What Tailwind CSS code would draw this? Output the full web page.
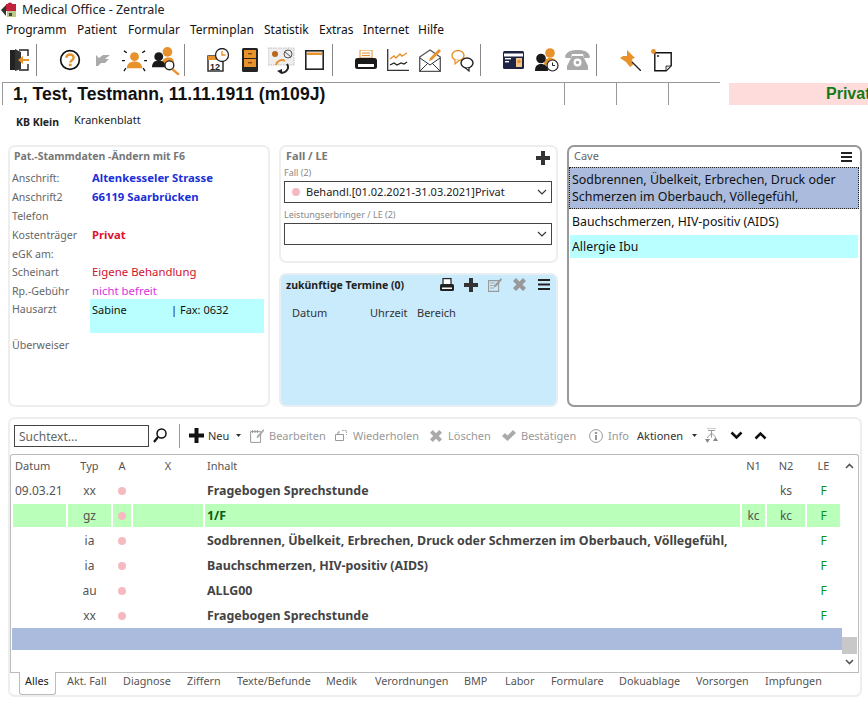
<!DOCTYPE html>
<html lang="de">
<head>
<meta charset="UTF-8">
<title>Medical Office - Zentrale</title>
<script src="https://cdn.jsdelivr.net/npm/@tailwindcss/browser@4"></script>
</head>
<body class="bg-white">
<div class="w-[868px] h-[703px] overflow-hidden bg-white text-[12px] leading-[16px] text-[#222] font-['Noto_Sans',sans-serif]">

 <!-- title bar -->
 <div class="h-[20px] flex items-center pl-[1px]">
  <svg width="16" height="16" viewBox="0 0 16 16"><path d="M0 8 5 3v11z" fill="#333"/><rect x="5" y="2" width="10" height="7" fill="#c2203c"/><circle cx="9" cy="3" r="2.5" fill="#c2203c"/><rect x="6" y="9" width="9" height="6" fill="#b9c98a"/><rect x="8" y="11" width="3" height="3" fill="#444"/></svg>
  <span class="ml-[5px] text-[12.5px]">Medical Office - Zentrale</span>
 </div>

 <!-- menu -->
 <div class="h-[22px] flex items-start pt-[2px] pl-[6px] text-[12px] text-[#111]">
  <span class="w-[71px]">Programm</span><span class="w-[51px]">Patient</span><span class="w-[62px]">Formular</span><span class="w-[74px]">Terminplan</span><span class="w-[55px]">Statistik</span><span class="w-[44px]">Extras</span><span class="w-[55px]">Internet</span><span>Hilfe</span>
 </div>

 <!-- toolbar -->
 <div class="mt-[2px] h-[32px] flex items-center">
  <svg class="ml-[10px]" width="20" height="24" viewBox="0 0 20 24"><path d="M0 2h5v20H0z" fill="#222"/><path d="M5 1l6 3v17l-6 2z" fill="#333"/><path d="M9 2h9v6M18 16v6H9" fill="none" stroke="#222" stroke-width="1.4"/><path d="M19 11h-6V8l-5 4 5 4v-3h6z" fill="#e8922c"/></svg>
  <div class="ml-[6px] w-[1px] h-[32px] bg-[#888]"></div>
  <svg class="ml-[22px]" width="22" height="22" viewBox="0 0 24 24"><circle cx="12" cy="12" r="10.2" fill="none" stroke="#111" stroke-width="1.8"/><path d="M8 9.5C8 7 10 6 12 6s4 1.2 4 3.4c0 3-3.6 3-3.6 5.4" fill="none" stroke="#e8922c" stroke-width="2.6"/><rect x="10.8" y="16" width="3" height="2.8" fill="#e8922c"/></svg>
  <svg class="ml-[14px]" width="15" height="12" viewBox="0 0 15 12"><path d="M1 1l3 3 4-3h7l-5 4h4l-4 4H6l-3 3H1z" fill="#aaa"/></svg>
  <svg class="ml-[12px]" width="25" height="25" viewBox="0 0 26 26"><circle cx="13" cy="9" r="4.6" fill="#e8922c"/><path d="M5 21c0-5 4-7 8-7s8 2 8 7z" fill="#e8922c"/><path d="M0 13h3M23 13h3M2 3l3 2M24 3l-3 2M2 24l2-3M24 24l-2-3" stroke="#111" stroke-width="1.3"/></svg>
  <svg class="ml-[5px]" width="28" height="29" viewBox="0 0 29 30"><circle cx="16" cy="6" r="5" fill="#e8922c"/><path d="M10 20c0-6 3-8 7-8s6 2 6 6z" fill="#e8922c"/><circle cx="7" cy="11" r="4.6" fill="#1a1a1a"/><path d="M0 22c0-5 3-7 7-7s7 2 7 7z" fill="#1a1a1a"/><circle cx="18" cy="20" r="4.6" fill="#fff" stroke="#222" stroke-width="1.4"/><path d="M21 24l7 6" stroke="#e8922c" stroke-width="2.4"/></svg>
  <div class="ml-[4px] w-[1px] h-[32px] bg-[#888]"></div>
  <svg class="ml-[22px]" width="23" height="24" viewBox="0 0 23 24"><rect x="1" y="8" width="15" height="15" fill="#fff" stroke="#222" stroke-width="1.4"/><rect x="1" y="8" width="15" height="4" fill="#e8922c"/><text x="3" y="21.5" font-size="9" font-weight="700" fill="#222" font-family="Liberation Sans">12</text><circle cx="15" cy="7" r="6.5" fill="#fff" stroke="#222" stroke-width="1.3"/><path d="M15 3v4h3.5" fill="none" stroke="#e8922c" stroke-width="1.4"/></svg>
  <svg class="ml-[12px]" width="16" height="24" viewBox="0 0 16 24"><rect width="16" height="24" rx="1.5" fill="#222"/><rect x="2" y="2" width="12" height="8" fill="#e8922c"/><rect x="2" y="11" width="12" height="8" fill="#e8922c"/><rect x="6" y="5" width="4" height="1.4" fill="#7a4a10"/><rect x="6" y="14" width="4" height="1.4" fill="#7a4a10"/></svg>
  <svg class="ml-[10px]" width="27" height="27" viewBox="0 0 27 27"><rect x="0" y="1" width="26" height="17" fill="#eee" stroke="#999" stroke-width=".6" stroke-dasharray="1.5 1"/><circle cx="7" cy="7" r="3" fill="#b9651a"/><circle cx="20" cy="7" r="4" fill="none" stroke="#555"/><path d="M17 5l6 5" stroke="#555"/><path d="M8 18a6 6 0 0 1 9-4" fill="none" stroke="#e8922c" stroke-width="2"/><path d="M19 17a5.500 5.500 0 0 1-7 8" fill="none" stroke="#222" stroke-width="2"/><path d="M14 22v5l-5-3z" fill="#222"/></svg>
  <svg class="ml-[10px]" width="19" height="20" viewBox="0 0 19 20"><rect x=".8" y=".8" width="17.400" height="18.400" fill="#fff" stroke="#222" stroke-width="1.600"/><rect x="2" y="2.500" width="15" height="2.500" fill="#e8922c"/></svg>
  <div class="ml-[8px] w-[1px] h-[32px] bg-[#888]"></div>
  <svg class="ml-[22px]" width="22" height="21" viewBox="0 0 22 21"><rect x="5" y="0" width="12" height="8" fill="#fff" stroke="#e8922c"/><path d="M7 3h8M7 5.500h8" stroke="#e8922c"/><rect x="0" y="8" width="22" height="11" rx="2.500" fill="#1a1a1a"/><rect x="3" y="14" width="16" height="3" fill="#fff"/></svg>
  <svg class="ml-[10px]" width="22" height="22" viewBox="0 0 22 22"><path d="M.7 0v21.300H22" fill="none" stroke="#333" stroke-width="1.300"/><path d="M3 10l4-3 2 2 4-4 2 2 5-3" fill="none" stroke="#e8922c" stroke-width="1.400"/><path d="M3 16l4-2 3 2 4-2 3 1 3-2" fill="none" stroke="#222" stroke-width="1.300"/></svg>
  <svg class="ml-[10px]" width="22" height="23" viewBox="0 0 22 23"><path d="M.7 8 11 1l10.300 7v14.300H.7z" fill="#fff" stroke="#555" stroke-width="1.300"/><path d="M1 9l10 7 10-7M1 22l8-8M21 22l-8-8" fill="none" stroke="#333"/><path d="M20 0l-9 9-1 3 3-1 9-9z" fill="#e8922c"/></svg>
  <svg class="ml-[10px]" width="23" height="23" viewBox="0 0 23 23"><ellipse cx="7" cy="6.500" rx="6" ry="5" fill="#fff" stroke="#e8922c" stroke-width="1.400"/><path d="M4 11v4l4-3.500" fill="#fff" stroke="#e8922c" stroke-width="1.200"/><ellipse cx="16" cy="14" rx="6" ry="5" fill="#fff" stroke="#222" stroke-width="1.400"/><path d="M18 19v3l-4-3.500" fill="#fff" stroke="#222" stroke-width="1.200"/></svg>
  <div class="ml-[6px] w-[1px] h-[32px] bg-[#888]"></div>
  <svg class="ml-[22px]" width="21" height="18" viewBox="0 0 21 18"><rect width="21" height="18" rx="1.500" fill="#1f2444"/><rect x="1" y="2.500" width="19" height="3" fill="#fff"/><rect x="2" y="7" width="6" height="1.400" fill="#fff"/><rect x="2" y="10" width="4" height="1.400" fill="#fff"/><rect x="13" y="7" width="6" height="9" fill="#f0c78a"/><circle cx="16" cy="10.500" r="1.800" fill="#e8922c"/></svg>
  <svg class="ml-[11px]" width="24" height="24" viewBox="0 0 24 24"><circle cx="15" cy="5" r="4.800" fill="#e8922c"/><path d="M9 17c0-5 2-7 6-7s7 2 7 6z" fill="#e8922c"/><circle cx="6" cy="10.500" r="4.800" fill="#1a1a1a"/><path d="M0 23c0-5 2-7 6-7s7 2 7 7z" fill="#1a1a1a"/><circle cx="17.500" cy="17.500" r="5.500" fill="#fff" stroke="#222" stroke-width="1.200"/><path d="M17.500 14.500v3h2.500" fill="none" stroke="#222"/></svg>
  <svg class="ml-[6px]" width="25" height="20" viewBox="0 0 25 20"><path d="M0 7C1 1 7 0 12.500 0S24 1 25 7l-1 1h-5l-1-4H7L6 8H1z" fill="#aaa"/><path d="M7 6h11l5 10v4H2v-4z" fill="#aaa"/><circle cx="12.500" cy="12.500" r="4" fill="#fff"/><circle cx="12.500" cy="12.500" r="1.800" fill="#aaa"/></svg>
  <div class="ml-[6px] w-[1px] h-[32px] bg-[#888]"></div>
  <svg class="ml-[23px]" width="21" height="21" viewBox="0 0 21 21"><path d="M7 0l8 8-3 1 1 6-3 2-4-5-6-4 3-2h4z" fill="#e8922c"/><path d="M12 12l9 9" stroke="#222" stroke-width="1.300"/></svg>
  <svg class="ml-[10px]" width="21" height="23" viewBox="0 0 21 23"><path d="M3.800 3.800h16.400v13l-5 5H3.800z" fill="#fff" stroke="#111" stroke-width="1.400"/><path d="M15 22v-5h5z" fill="#ddd" stroke="#111" stroke-width=".8"/><circle cx="2.500" cy="2.500" r="2.400" fill="#e8922c"/><circle cx="7" cy="7" r="1" fill="#111"/></svg>
 </div>

 <!-- patient header -->
 <div class="mt-[6px] h-[23px] flex pl-[2px]">
  <div class="w-[562px] border-t border-l border-[#999] pl-[10px] font-['Liberation_Sans',sans-serif] font-bold text-[17.600px] leading-[22px] text-[#111]">1, Test, Testmann, 11.11.1911 (m109J)</div>
  <div class="w-[52px] border-t border-l border-[#999]"></div>
  <div class="w-[52px] border-t border-l border-[#999]"></div>
  <div class="w-[52px] border-t border-l border-[#999]"></div>
  <div class="ml-[9px] w-[139px] mt-[1px] bg-[#ffdcdc] pl-[97px] font-['Liberation_Sans',sans-serif] font-bold text-[16px] leading-[21px] text-[#157a15] whitespace-nowrap">Privat</div>
 </div>

 <!-- sub tabs -->
 <div class="h-[40px] flex items-start pt-[7px] text-[11px]">
  <span class="ml-[16px] w-[58px] font-bold text-[10.500px] mt-[2px]">KB Klein</span>
  <span>Krankenblatt</span>
 </div>

 <!-- top cards -->
 <div class="flex h-[262px] pl-[8px]">
  <div class="w-[262px] rounded-[7px] border-2 border-[#eee] relative">
   <div class="pl-[4px] pt-[1px] h-[20px] font-bold text-[10.500px] text-[#777]">Pat.-Stammdaten -Ändern mit F6</div>
   <div class="grid grid-cols-[80px_1fr] auto-rows-[19px] pl-[2px] mt-[1px] text-[10.600px] text-[#666] items-center">
    <div>Anschrift:</div><div class="font-bold text-[11.300px] text-[#1a2fd8]">Altenkesseler Strasse</div>
    <div>Anschrift2</div><div class="font-bold text-[11.300px] text-[#1a2fd8]">66119 Saarbrücken</div>
    <div>Telefon</div><div></div>
    <div>Kostenträger</div><div class="font-bold text-[11.300px] text-[#e01030]">Privat</div>
    <div>eGK am:</div><div></div>
    <div class="-mt-[2px]">Scheinart</div><div class="-mt-[1px] text-[11.400px] text-[#d01030]">Eigene Behandlung</div>
    <div class="-mt-[2px]">Rp.-Gebühr</div><div class="-mt-[1px] text-[11.400px] text-[#e030e0]">nicht befreit</div>
    <div class="self-start">Hausarzt</div>
    <div class="row-span-2 self-start -ml-[2px] h-[34px] mr-[4px] -mt-[2px] bg-[#baffff] text-[11px] text-[#111] pl-[2px] pt-[3px] flex"><span class="w-[79px]">Sabine</span><span>| Fax: 0632</span></div>
    <div></div>
    <div class="-mt-[4px] h-[19px]">Überweiser</div>
   </div>
  </div>

  <div class="ml-[9px] w-[279px] flex flex-col">
   <div class="h-[118px] rounded-[7px] border-2 border-[#eee] pl-[3px] pr-[4px]">
    <div class="h-[20px] pt-[1px] flex justify-between items-start">
     <span class="pl-[2px] font-bold text-[11px] text-[#777]">Fall / LE</span>
     <svg class="mr-[2px] mt-[3px]" width="14" height="14" viewBox="0 0 14 14"><path d="M5 0h4v5h5v4H9v5H5V9H0V5h5z" fill="#333"/></svg>
    </div>
    <div class="text-[9px] leading-[12px] text-[#888]">Fall (2)</div>
    <div class="mt-[2px] h-[22px] border border-[#444] flex items-center pl-[7px] relative text-[11px] text-[#222]">
     <span class="w-[8px] h-[8px] rounded-full bg-[#f7b9c0]"></span>
     <span class="ml-[6px]">Behandl.[01.02.2021-31.03.2021]Privat</span>
     <svg class="absolute right-[4px] top-[7px]" width="10" height="6" viewBox="0 0 10 6"><path d="M1 1l4 4 4-4" fill="none" stroke="#333" stroke-width="1.100"/></svg>
    </div>
    <div class="text-[9px] leading-[12px] text-[#888] mt-[6px]">Leistungserbringer / LE (2)</div>
    <div class="mt-[2px] h-[22px] border border-[#444] relative">
     <svg class="absolute right-[4px] top-[7px]" width="10" height="6" viewBox="0 0 10 6"><path d="M1 1l4 4 4-4" fill="none" stroke="#333" stroke-width="1.100"/></svg>
    </div>
   </div>
   <div class="mt-[10px] h-[134px] rounded-[7px] border-2 border-[#e8eef2] bg-[#c9ebfc]">
    <div class="h-[19px] flex items-center pl-[5px] relative">
     <span class="w-[149px] font-bold text-[10.500px] text-[#222]">zukünftige Termine (0)</span>
     <svg class="ml-[5px]" width="14" height="14" viewBox="0 0 14 14"><rect x="3" y=".6" width="8" height="6" fill="#fff" stroke="#222" stroke-width="1.200"/><rect y="6" width="14" height="7" rx="1.500" fill="#222"/><rect x="2" y="9.500" width="10" height="1.500" fill="#fff"/></svg>
     <svg class="ml-[10px]" width="14" height="14" viewBox="0 0 14 14"><path d="M5 0h4v5h5v4H9v5H5V9H0V5h5z" fill="#333"/></svg>
     <svg class="ml-[10px]" width="14" height="14" viewBox="0 0 14 14"><path d="M.6 2.600h10v10.800H.6z" fill="none" stroke="#999" stroke-width="1.100"/><path d="M2 5h5M2 7.500h4M2 10h4" stroke="#aaa"/><path d="M13 0 6.500 7l-.8 2.500L8 8.800l6-7z" fill="#999"/></svg>
     <svg class="ml-[11px]" width="13" height="13" viewBox="0 0 13 13"><path d="M3 0l3.500 3.500L10 0l3 3-3.500 3.500L13 10l-3 3-3.500-3.500L3 13l-3-3 3.500-3.500L0 3z" fill="#999"/></svg>
     <svg class="ml-[12px]" width="12" height="11" viewBox="0 0 12 11"><path d="M0 0h12v2H0zM0 4.500h12v2H0zM0 9h12v2H0z" fill="#222"/></svg>
    </div>
    <div class="mt-[11px] flex text-[11px] text-[#333] pl-[11px] h-[16px]"><span class="w-[78px]">Datum</span><span class="w-[47px]">Uhrzeit</span><span>Bereich</span></div>
   </div>
  </div>

  <div class="ml-[9px] w-[295px] rounded-[7px] border-2 border-[#999]">
   <div class="h-[20px] flex items-center justify-between pl-[5px] pr-[8px]">
    <span class="-mt-[2px] text-[11px] text-[#666]">Cave</span>
    <svg class="-mt-[1px]" width="11" height="10" viewBox="0 0 11 10"><path d="M0 0h11v2H0zM0 4h11v2H0zM0 8h11v2H0z" fill="#222"/></svg>
   </div>
   <div class="h-[42px] w-[290px] border border-dotted border-[#222] bg-[#aabbdd] pl-[2px] pt-[3px] leading-[17px] text-[12.400px] text-[#111]">Sodbrennen, Übelkeit, Erbrechen, Druck oder<br>Schmerzen im Oberbauch, Völlegefühl,</div>
   <div class="h-[26px] pl-[3px] flex items-center text-[12.300px] text-[#111]">Bauchschmerzen, HIV-positiv (AIDS)</div>
   <div class="h-[23px] w-[288px] ml-[1px] bg-[#baffff] pl-[2px] flex items-center text-[12.300px] text-[#111]">Allergie Ibu</div>
  </div>
 </div>

 <!-- lower panel -->
 <div class="mt-[10px] ml-[8px] w-[854px] h-[280px] rounded-[7px] border-2 border-[#eee]">
  <div class="h-[35px] pb-[2px] flex items-center text-[11px] text-[#999]">
   <div class="ml-[4px] w-[135px] h-[22px] border border-[#444] pl-[4px] pt-[3px] text-[12px] text-[#666]">Suchtext...</div>
   <svg class="ml-[4px]" width="14" height="15" viewBox="0 0 14 15"><circle cx="8.500" cy="5.500" r="4.500" fill="#fff" stroke="#111" stroke-width="1.500"/><path d="M5 9l-4 5" stroke="#111" stroke-width="2.200"/></svg>
   <div class="ml-[12px] w-[1px] h-[24px] bg-[#999]"></div>
   <svg class="ml-[9px]" width="15" height="15" viewBox="0 0 15 15"><path d="M5.500 0h4v5.500H15v4H9.500V15h-4V9.500H0v-4h5.500z" fill="#111"/></svg>
   <span class="ml-[4px] w-[28px] text-[#333]">Neu</span>
   <svg width="5" height="3" viewBox="0 0 5 3"><path d="M0 0h5L2.500 3z" fill="#333"/></svg>
   <svg class="ml-[9px]" width="14" height="14" viewBox="0 0 14 14"><path d="M.6 2.600h10v10.800H.6z" fill="none" stroke="#999"/><path d="M2.500 1v3M5 1v3M7.500 1v3" stroke="#999"/><path d="M13.500 0 7 7l-.5 2 2-.5 6-7z" fill="#aaa"/></svg>
   <span class="ml-[5px] w-[66px]">Bearbeiten</span>
   <svg width="12" height="11" viewBox="0 0 12 11"><path d="M.5 4.500h8v6h-8zM3 4.500V2h2" fill="none" stroke="#999"/><path d="M7 .5h4.500V5" fill="none" stroke="#999" stroke-dasharray="1.500 1.200"/></svg>
   <span class="ml-[6px] w-[77px]">Wiederholen</span>
   <svg width="12" height="12" viewBox="0 0 13 13"><path d="M3 0l3.500 3.500L10 0l3 3-3.500 3.500L13 10l-3 3-3.500-3.500L3 13l-3-3 3.500-3.500L0 3z" fill="#aaa"/></svg>
   <span class="ml-[6px] w-[54px]">Löschen</span>
   <svg width="14" height="11" viewBox="0 0 14 11"><path d="M0 6l3-3 2.500 2.500L11 0l3 3-8.500 8z" fill="#aaa"/></svg>
   <span class="ml-[5px] w-[68px]">Bestätigen</span>
   <svg width="14" height="14" viewBox="0 0 14 14"><circle cx="7" cy="7" r="6.400" fill="none" stroke="#999"/><path d="M5.800 3h2.400v2H5.800zM6 6h2v5H6z" fill="#999"/></svg>
   <span class="ml-[5px] w-[29px]">Info</span>
   <span class="w-[55px] text-[#333]">Aktionen</span>
   <svg width="5" height="3" viewBox="0 0 5 3"><path d="M0 0h5L2.500 3z" fill="#333"/></svg>
   <svg class="ml-[8px]" width="14" height="15" viewBox="0 0 14 15"><path d="M2 0h9M3 2.500h7" stroke="#999" stroke-width="1.200"/><path d="M6.500 2.500v7M6.500 5 2 10M6.500 5l4 4" fill="none" stroke="#999"/><path d="M0 11l2.500 4L5 11zM10.500 9l-2.500 4h5z" fill="#888"/></svg>
   <svg class="ml-[11px]" width="13" height="9" viewBox="0 0 13 9"><path d="M1.500 1.500l5 5 5-5" fill="none" stroke="#111" stroke-width="2.600"/></svg>
   <svg class="ml-[11px]" width="13" height="9" viewBox="0 0 13 9"><path d="M1.500 7.500l5-5 5 5" fill="none" stroke="#111" stroke-width="2.600"/></svg>
  </div>

  <div class="w-[849px] h-[218px] rounded-t-[3px] border border-b-0 border-[#bbb] flex relative">
   <div class="w-[831px] text-[#555]">
    <div class="grid grid-cols-[53px_43px_18px_70px_535px_23px_38px_33px] gap-x-[2px] pl-[2px] h-[22px] items-center text-[11px] text-[#555]">
     <div class="pl-[2px]">Datum</div><div class="text-center">Typ</div><div class="text-center">A</div><div class="text-center">X</div><div class="pl-[2px]">Inhalt</div><div class="text-center">N1</div><div class="text-center">N2</div><div class="text-center">LE</div>
    </div>
    <div class="mt-[1px] grid grid-cols-[53px_43px_18px_70px_535px_23px_38px_33px] gap-x-[2px] pl-[2px] auto-rows-[25px] items-stretch">
     <div class="flex items-center pl-[2px]">09.03.21</div><div class="flex items-center justify-center">xx</div><div class="flex items-center justify-center"><span class="w-[8px] h-[8px] rounded-full bg-[#f7b9c0]"></span></div><div></div><div class="flex items-center pl-[2px] font-bold text-[12.400px] text-[#444]">Fragebogen Sprechstunde</div><div></div><div class="flex items-center justify-center">ks</div><div class="flex items-center justify-center text-[#109010]">F</div>

     <div class="my-[1px] bg-[#baffba]"></div><div class="my-[1px] bg-[#baffba] flex items-center justify-center">gz</div><div class="my-[1px] bg-[#baffba] flex items-center justify-center"><span class="w-[8px] h-[8px] rounded-full bg-[#f7b9c0]"></span></div><div class="my-[1px] bg-[#baffba]"></div><div class="my-[1px] bg-[#baffba] flex items-center pl-[2px] font-bold text-[12.400px] text-[#0b5c16]">1/F</div><div class="my-[1px] bg-[#baffba] flex items-center justify-center">kc</div><div class="my-[1px] bg-[#baffba] flex items-center justify-center">kc</div><div class="my-[1px] bg-[#baffba] flex items-center justify-center text-[#109010]">F</div>

     <div></div><div class="flex items-center justify-center">ia</div><div class="flex items-center justify-center"><span class="w-[8px] h-[8px] rounded-full bg-[#f7b9c0]"></span></div><div></div><div class="flex items-center pl-[2px] font-bold text-[12.400px] text-[#444]">Sodbrennen, Übelkeit, Erbrechen, Druck oder Schmerzen im Oberbauch, Völlegefühl,</div><div></div><div></div><div class="flex items-center justify-center text-[#109010]">F</div>

     <div></div><div class="flex items-center justify-center">ia</div><div class="flex items-center justify-center"><span class="w-[8px] h-[8px] rounded-full bg-[#f7b9c0]"></span></div><div></div><div class="flex items-center pl-[2px] font-bold text-[12.400px] text-[#444]">Bauchschmerzen, HIV-positiv (AIDS)</div><div></div><div></div><div class="flex items-center justify-center text-[#109010]">F</div>

     <div></div><div class="flex items-center justify-center">au</div><div class="flex items-center justify-center"><span class="w-[8px] h-[8px] rounded-full bg-[#f7b9c0]"></span></div><div></div><div class="flex items-center pl-[2px] font-bold text-[12.400px] text-[#444]">ALLG00</div><div></div><div></div><div class="flex items-center justify-center text-[#109010]">F</div>

     <div></div><div class="flex items-center justify-center">xx</div><div class="flex items-center justify-center"><span class="w-[8px] h-[8px] rounded-full bg-[#f7b9c0]"></span></div><div></div><div class="flex items-center pl-[2px] font-bold text-[12.400px] text-[#444]">Fragebogen Sprechstunde</div><div></div><div></div><div class="flex items-center justify-center text-[#109010]">F</div>
    </div>
    <div class="h-[22px] ml-[1px] w-[830px] bg-[#aabbdd]"></div>
   </div>
   <!-- scrollbar -->
   <div class="w-[15px] flex flex-col items-center">
    <svg class="mt-[8px]" width="9" height="6" viewBox="0 0 9 6"><path d="M1 5l3.500-3.500L8 5" fill="none" stroke="#555" stroke-width="1.600"/></svg>
    <div class="mt-[168px] w-[15px] h-[17px] bg-[#c8c8c8]"></div>
    <svg class="mt-[5px]" width="9" height="6" viewBox="0 0 9 6"><path d="M1 1l3.500 3.500L8 1" fill="none" stroke="#555" stroke-width="1.600"/></svg>
   </div>
  </div>

  <div class="w-[849px] border-t border-[#bbb] flex text-[10.800px] leading-[15px] text-[#555] pl-[9px]">
   <span class="-mt-[1px] w-[37px] h-[23px] border border-t-0 border-[#bbb] rounded-b-[3px] bg-white pl-[5px] pt-[1px] text-[#222]">Alles</span>
   <span class="ml-[11px] w-[56px]">Akt. Fall</span><span class="w-[64px]">Diagnose</span><span class="w-[50px]">Ziffern</span><span class="w-[89px]">Texte/Befunde</span><span class="w-[49px]">Medik</span><span class="w-[89px]">Verordnungen</span><span class="w-[41px]">BMP</span><span class="w-[46px]">Labor</span><span class="w-[68px]">Formulare</span><span class="w-[77px]">Dokuablage</span><span class="w-[69px]">Vorsorgen</span><span>Impfungen</span>
  </div>
 </div>
</div>
</body>
</html>
